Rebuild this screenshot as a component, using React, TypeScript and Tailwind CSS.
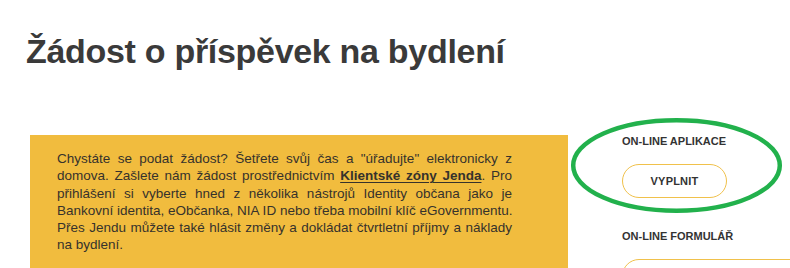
import React from "react";

const LINES: React.ReactNode[] = [
  <>Chystáte se podat žádost? Šetřete svůj čas a "úřadujte" elektronicky z</>,
  <>
    domova. Zašlete nám žádost prostřednictvím{" "}
    <a href="#" className="font-bold underline underline-offset-2">
      Klientské zóny Jenda
    </a>
    . Pro
  </>,
  <>přihlášení si vyberte hned z několika nástrojů Identity občana jako je</>,
  <>Bankovní identita, eObčanka, NIA ID nebo třeba mobilní klíč eGovernmentu.</>,
  <>Přes Jendu můžete také hlásit změny a dokládat čtvrtletní příjmy a náklady</>,
];

function PillButton({ label, wide }: { label?: string; wide?: boolean }) {
  return (
    <button
      aria-label={label ?? "Stáhnout"}
      className={`h-[34px] shrink-0 rounded-full border border-[#f0c14b] bg-white text-[11px] font-bold tracking-[0.2px] text-[#333] ${
        wide ? "w-[200px]" : "w-[105px]"
      }`}
    >
      {label}
    </button>
  );
}

export default function App() {
  return (
    <div
      className="relative h-[268px] w-[790px] overflow-hidden bg-white text-[#333]"
      style={{ fontFamily: '"Liberation Sans", Arial, sans-serif' }}
    >
      <h1 className="ml-[26px] mt-[31px] text-[34px] font-bold leading-[40px] tracking-[-0.3px] text-[#3a3a3a]">
        Žádost o příspěvek na bydlení
      </h1>

      <div className="ml-[30px] mt-[64px] flex gap-[54px]">
        {/* yellow intro box */}
        <div className="w-[538px] shrink-0 bg-[#f1bc3e] pb-[30px] pl-[27px] pt-[15px] text-[13.5px] leading-[17.3px] text-[#36322c]">
          {LINES.map((l, i) => (
            <div key={i} className="w-[455px] whitespace-nowrap text-justify [text-align-last:justify]">
              {l}
            </div>
          ))}
          <div className="w-[455px]">na bydlení.</div>
        </div>

        {/* right column */}
        <div className="flex flex-col">
          <div className="text-[11px] font-bold leading-[13px] text-[#333]">ON-LINE APLIKACE</div>
          <div className="mt-[16px]">
            <PillButton label="VYPLNIT" />
          </div>
          <div className="mt-[32px] text-[11px] font-bold leading-[13px] text-[#333]">ON-LINE FORMULÁŘ</div>
          <div className="mt-[16px]">
            <PillButton wide />
          </div>
        </div>
      </div>

      {/* hand-drawn green annotation ellipse */}
      <svg
        className="pointer-events-none absolute left-[569px] top-[116px]"
        width="216"
        height="100"
        viewBox="0 0 216 100"
      >
        <ellipse cx="107.5" cy="49.5" rx="103.3" ry="45.3" fill="none" stroke="#22b14c" strokeWidth="4.5" />
      </svg>
    </div>
  );
}
